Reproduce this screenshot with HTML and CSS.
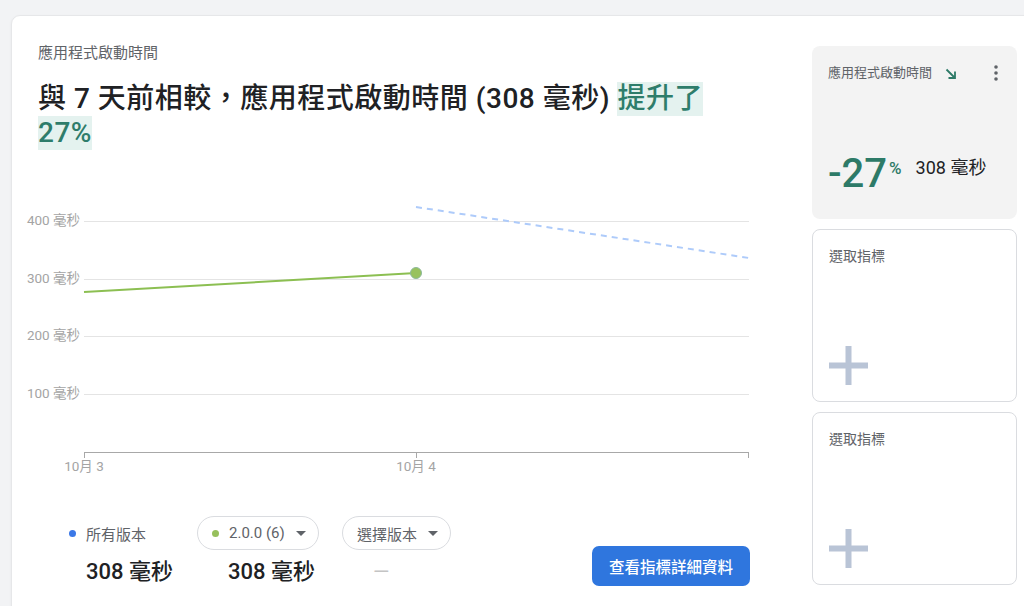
FILE: index.html
```html
<!DOCTYPE html>
<html lang="zh-Hant">
<head>
<meta charset="utf-8">
<title>應用程式啟動時間</title>
<link rel="stylesheet" href="styles.css">
</head>
<body>
<div class="card">
  <div class="main">
    <div class="title">應用程式啟動時間</div>
    <h1 class="headline">與 7 天前相較，應用程式啟動時間 (308 毫秒) <span class="hl">提升了</span> <span class="hl">27%</span></h1>
    <svg class="chart" width="730" height="290" viewBox="0 0 730 290">
      <g class="grid">
        <line x1="60" y1="31.5" x2="725" y2="31.5"/>
        <line x1="60" y1="89.5" x2="725" y2="89.5"/>
        <line x1="60" y1="146.5" x2="725" y2="146.5"/>
        <line x1="60" y1="204.5" x2="725" y2="204.5"/>
      </g>
      <g class="axis">
        <line x1="60" y1="262.5" x2="725" y2="262.5"/>
        <line x1="60.5" y1="262" x2="60.5" y2="268"/>
        <line x1="392.5" y1="262" x2="392.5" y2="268"/>
        <line x1="724.5" y1="262" x2="724.5" y2="268"/>
      </g>
      <g class="ylabels">
        <text x="56" y="35">400 毫秒</text>
        <text x="56" y="93">300 毫秒</text>
        <text x="56" y="150">200 毫秒</text>
        <text x="56" y="208">100 毫秒</text>
      </g>
      <g class="xlabels">
        <text x="60" y="281">10月 3</text>
        <text x="392" y="281">10月 4</text>
      </g>
      <line class="dashed" x1="392" y1="17" x2="725" y2="68"/>
      <line class="series-line" x1="60" y1="102" x2="392" y2="83"/>
      <circle class="series-dot" cx="392" cy="83" r="5.5"/>
    </svg>
    <div class="footer">
      <div class="legend">
        <div class="series col1">
          <div class="series-head"><span class="dot blue"></span><span>所有版本</span></div>
          <div class="value v1">308 毫秒</div>
        </div>
        <div class="series col2">
          <div class="chip"><span class="dot green"></span><span>2.0.0 (6)</span><span class="caret"></span></div>
          <div class="value v2">308 毫秒</div>
        </div>
        <div class="series col3">
          <div class="chip chip-plain"><span>選擇版本</span><span class="caret"></span></div>
          <div class="value v3 empty">—</div>
        </div>
      </div>
      <button class="details">查看指標詳細資料</button>
    </div>
  </div>
  <aside class="side">
    <div class="tile tile-active">
      <div class="tile-head">
        <span class="tile-title">應用程式啟動時間</span>
        <svg class="trend" width="12" height="12" viewBox="0 0 12 12"><path d="M1.5 1.5 L10 10 M3.5 10 H10 V3.5" fill="none" stroke="#2d7a67" stroke-width="1.8"/></svg>
        <svg class="kebab" width="4" height="16" viewBox="0 0 4 16"><circle cx="2" cy="2" r="1.8"/><circle cx="2" cy="8" r="1.8"/><circle cx="2" cy="14" r="1.8"/></svg>
      </div>
      <div class="metric">
        <span class="pct">-27</span><span class="pct-sign">%</span><span class="abs">308 毫秒</span>
      </div>
    </div>
    <div class="tile tile-empty">
      <span class="pick">選取指標</span>
      <svg class="plus" width="39" height="39" viewBox="0 0 39 39"><rect x="16.5" y="0" width="6" height="39"/><rect x="0" y="16.5" width="39" height="6"/></svg>
    </div>
    <div class="tile tile-empty">
      <span class="pick">選取指標</span>
      <svg class="plus" width="39" height="39" viewBox="0 0 39 39"><rect x="16.5" y="0" width="6" height="39"/><rect x="0" y="16.5" width="39" height="6"/></svg>
    </div>
  </aside>
</div>
</body>
</html>
```
FILE: styles.css
```css
html, body {
  margin: 0;
  padding: 0;
}
body {
  background: #f2f3f5;
  overflow: hidden;
  font-family: "Roboto", "Noto Sans CJK TC", sans-serif;
  color: #202124;
  height: 606px;
}
.card {
  margin: 15px 0 0 11px;
  width: 1040px;
  height: 620px;
  box-sizing: border-box;
  background: #fff;
  border: 1px solid #e6e7e9;
  border-radius: 9px;
  box-shadow: 0 1px 3px rgba(0, 0, 0, 0.05);
  padding: 28px 0 0 26px;
  display: flex;
  align-items: flex-start;
}
.main {
  width: 712px;
  flex: none;
}
.title {
  font-size: 15px;
  line-height: 18px;
  color: #5f6368;
}
.headline {
  margin: 20px 0 0;
  max-width: 700px;
  font-size: 28px;
  line-height: 34px;
  font-weight: 500;
  letter-spacing: 0.5px;
  color: #202124;
}
.hl {
  display: inline-block;
  height: 34px;
  line-height: 34px;
  background: #e4f2ef;
  color: #2e7d6b;
}
.chart {
  display: block;
  margin: 40px 0 0 -14px;
  overflow: visible;
}
.grid line {
  stroke: #e4e4e4;
  stroke-width: 1;
}
.axis line {
  stroke: #a8a8a8;
  stroke-width: 1;
}
.ylabels text, .xlabels text {
  font-family: "Roboto", "Noto Sans CJK TC", sans-serif;
  font-size: 13.5px;
  fill: #a4a4a4;
}
.ylabels text { text-anchor: end; }
.xlabels text { text-anchor: middle; }
.dashed {
  stroke: #aecbfa;
  stroke-width: 2;
  stroke-dasharray: 6 5;
}
.series-line {
  stroke: #8cbf52;
  stroke-width: 2;
}
.series-dot {
  fill: #98c25e;
  stroke: #8db99a;
  stroke-width: 1;
}
.footer {
  margin-top: 36px;
  display: flex;
  justify-content: space-between;
  align-items: flex-end;
}
.legend {
  display: flex;
  margin-left: 31px;
}
.series {
  display: flex;
  flex-direction: column;
}
.col1 { width: 128px; }
.col2 { width: 145px; }
.series-head, .chip {
  height: 34px;
  display: flex;
  align-items: center;
  font-size: 15px;
  color: #5f6368;
}
.series-head .dot { margin-right: 10px; }
.chip {
  align-self: flex-start;
  box-sizing: border-box;
  border: 1px solid #dadce0;
  border-radius: 17px;
  padding: 0 12px 0 14px;
}
.chip-plain { padding-left: 14px; }
.chip .dot { margin-right: 10px; }
.dot {
  width: 7px;
  height: 7px;
  border-radius: 50%;
  display: inline-block;
}
.dot.blue { background: #3b78e7; }
.dot.green { background: #97c05c; }
.caret {
  margin-left: 11px;
  width: 0;
  height: 0;
  border-left: 5px solid transparent;
  border-right: 5px solid transparent;
  border-top: 5px solid #5f6368;
}
.value {
  margin-top: 8px;
  font-size: 22px;
  line-height: 28px;
  font-weight: 500;
  color: #202124;
  white-space: nowrap;
}
.v1 { padding-left: 17px; }
.v2 { padding-left: 31px; }
.v3 { padding-left: 31px; }
.value.empty {
  color: #c4c4c4;
  font-weight: 400;
  font-size: 21px;
}
.details {
  height: 40px;
  padding: 0 17px;
  border: none;
  border-radius: 7px;
  background: #2f76de;
  color: #fff;
  font-family: "Roboto", "Noto Sans CJK TC", sans-serif;
  font-size: 15.5px;
  font-weight: 500;
  cursor: pointer;
}
.side {
  width: 205px;
  flex: none;
  margin: 2px 0 0 62px;
  display: flex;
  flex-direction: column;
  gap: 10px;
}
.tile {
  height: 173px;
  box-sizing: border-box;
  border-radius: 8px;
}
.tile-active {
  background: #f3f3f3;
  padding: 19px 16px 0 16px;
}
.tile-head {
  display: flex;
  align-items: center;
  height: 16px;
}
.tile-title {
  font-size: 13px;
  line-height: 16px;
  color: #5f6368;
}
.trend {
  margin-left: 13px;
  margin-top: 1px;
}
.kebab {
  margin-left: auto;
  margin-right: 3px;
  fill: #5f6368;
}
.metric {
  margin-top: 73px;
  display: flex;
  align-items: flex-start;
}
.pct {
  font-size: 40px;
  line-height: 40px;
  font-weight: 500;
  color: #2d7a67;
}
.pct-sign {
  margin-top: 4px;
  margin-left: 2px;
  font-size: 17px;
  line-height: 20px;
  font-weight: 500;
  color: #2d7a67;
}
.abs {
  margin-top: 4px;
  margin-left: 14px;
  font-size: 18px;
  line-height: 20px;
  color: #202124;
}
.tile-empty {
  background: #fff;
  border: 1px solid #dadce0;
  padding: 18px 16px 16px 16px;
  display: flex;
  flex-direction: column;
  justify-content: space-between;
  align-items: flex-start;
}
.pick {
  font-size: 14px;
  line-height: 16px;
  color: #5f6368;
}
.plus {
  fill: #b9c4d6;
}
```
